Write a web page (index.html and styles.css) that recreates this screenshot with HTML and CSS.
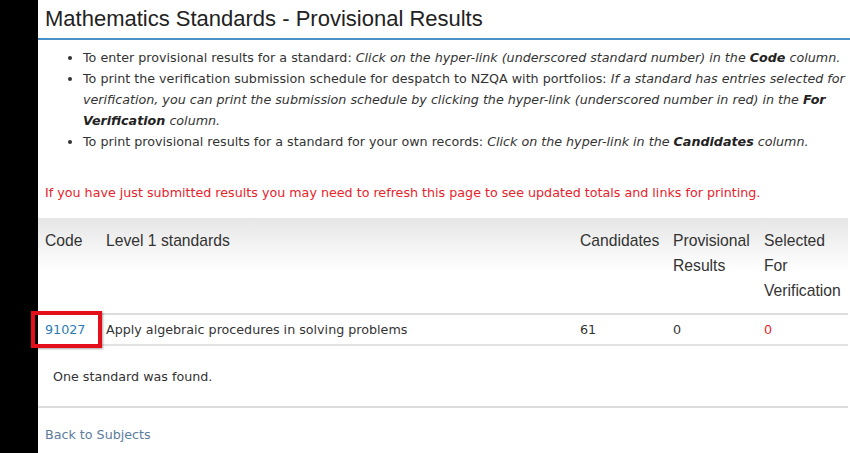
FILE: index.html
```
<!DOCTYPE html>
<html lang="en">
<head>
    <meta charset="UTF-8">
    <title>Mathematics Standards - Provisional Results</title>
    <link rel="stylesheet" href="styles.css">
</head>
<body>
    <div class="page">
        <h1 class="title">Mathematics Standards - Provisional Results</h1>
        <ul class="notes">
            <li>To enter provisional results for a standard: <em>Click on the hyper-link (underscored standard number) in the <b>Code</b> column.</em></li>
            <li>To print the verification submission schedule for despatch to NZQA with portfolios: <em>If a standard has entries selected for verification, you can print the submission schedule by clicking the hyper-link (underscored number in red) in the <b>For Verification</b> column.</em></li>
            <li>To print provisional results for a standard for your own records: <em>Click on the hyper-link in the <b>Candidates</b> column.</em></li>
        </ul>
        <p class="warning">If you have just submitted results you may need to refresh this page to see updated totals and links for printing.</p>
        <table class="standards">
            <thead>
                <tr>
                    <th class="c-code">Code</th>
                    <th class="c-title">Level 1 standards</th>
                    <th class="c-cand">Candidates</th>
                    <th class="c-prov">Provisional Results</th>
                    <th class="c-sel">Selected For Verification</th>
                </tr>
            </thead>
            <tbody>
                <tr>
                    <td class="code"><a href="#">91027</a><span class="mark"></span></td>
                    <td>Apply algebraic procedures in solving problems</td>
                    <td>61</td>
                    <td>0</td>
                    <td class="red">0</td>
                </tr>
            </tbody>
        </table>
        <div class="found">One standard was found.</div>
        <a class="back" href="#">Back to Subjects</a>
    </div>
</body>
</html>
```

FILE: styles.css
```
* {
    margin: 0;
    padding: 0;
}
html, body {
    height: 100%;
}
body {
    background: #000;
    font-family: "DejaVu Sans", Verdana, sans-serif;
    font-size: 12.7px;
    color: #333;
}
.page {
    margin-left: 38px;
    min-height: 100%;
    background: #fff;
}
.title {
    font-family: "Liberation Sans", Arial, sans-serif;
    font-weight: normal;
    font-size: 22px;
    line-height: 26px;
    color: #222;
    padding: 6px 7px;
    border-bottom: 2px solid #4a8fc6;
}
.notes {
    margin-top: 7px;
    padding-left: 45px;
    line-height: 21px;
}
.notes b {
    color: #222;
}
.warning {
    margin-top: 30px;
    padding-left: 7px;
    line-height: 21px;
    color: #e8232b;
}
.standards {
    margin-top: 15px;
    width: 810px;
    border-collapse: collapse;
}
.standards th,
.standards td {
    box-sizing: border-box;
}
.c-code { width: 61px; }
.c-title { width: 474px; }
.c-cand { width: 93px; }
.c-prov { width: 91px; }
.c-sel { width: 91px; }
.standards thead tr {
    background: linear-gradient(#e6e6e6, #fff 55%);
}
.standards th {
    font-family: "Liberation Sans", Arial, sans-serif;
    font-weight: normal;
    font-size: 15.7px;
    line-height: 25px;
    text-align: left;
    vertical-align: top;
    color: #333;
    padding: 10px 0 10px 7px;
    border-bottom: 2px solid #dcdcdc;
}
.standards td {
    line-height: 21px;
    padding: 4px 0 4px 7px;
    border-bottom: 2px solid #e2e2e2;
}
.standards a {
    color: #2b7cb5;
    text-decoration: none;
}
.standards .red {
    color: #e8232b;
}
.code {
    position: relative;
}
.mark {
    position: absolute;
    left: -7px;
    top: -4px;
    width: 71px;
    height: 37px;
    box-sizing: border-box;
    border: 4px solid #e3101b;
    box-shadow: 1px 1px 2px rgba(0,0,0,0.35);
}
.found {
    padding: 20px 0 19px 15px;
    line-height: 21px;
    margin-right: 2px;
    border-bottom: 2px solid #dcdcdc;
}
.back {
    display: block;
    margin-top: 16px;
    padding-left: 7px;
    line-height: 21px;
    color: #5b7d9c;
    text-decoration: none;
}
```
